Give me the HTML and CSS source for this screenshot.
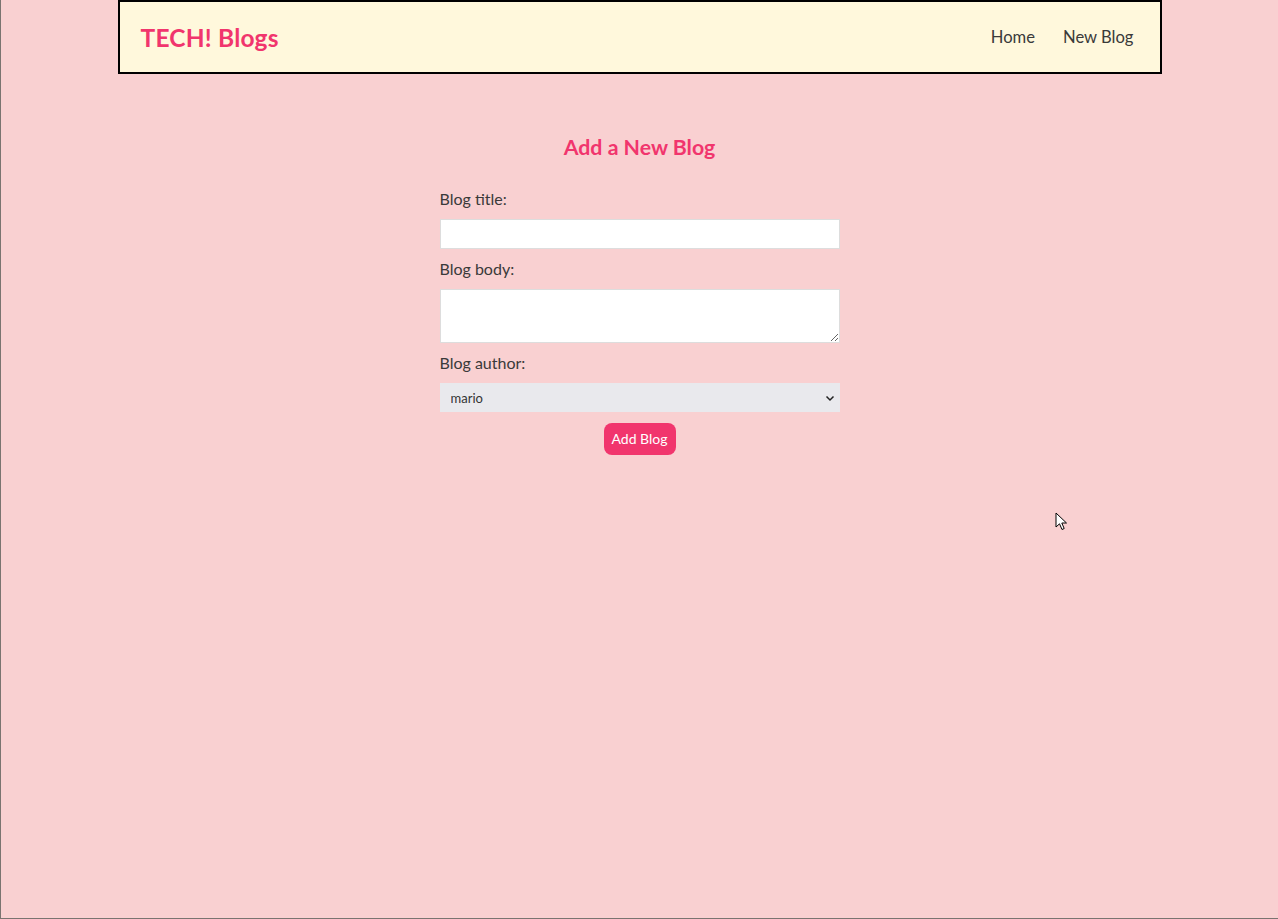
FILE: index.html
```html
<!DOCTYPE html>
<html lang="en">
<head>
<meta charset="utf-8">
<title>TECH! Blogs</title>
<link rel="stylesheet" href="styles.css">
</head>
<body>
<div class="frame">
  <nav class="navbar">
    <h1 class="brand">TECH! Blogs</h1>
    <div class="links">
      <a href="#">Home</a>
      <a href="#">New Blog</a>
    </div>
  </nav>
  <div class="create">
    <h2 class="heading">Add a New Blog</h2>
    <form class="form">
      <label class="label">Blog title:</label>
      <input class="field" type="text">
      <label class="label">Blog body:</label>
      <textarea class="field area"></textarea>
      <label class="label">Blog author:</label>
      <div class="select-wrap">
        <select class="field select">
          <option>mario</option>
          <option>yoshi</option>
        </select>
        <svg class="chevron" width="10" height="8" viewBox="0 0 10 8"><path d="M1.5 2.5 L5 6 L8.5 2.5" fill="none" stroke="#222" stroke-width="1.5"/></svg>
      </div>
      <button class="btn" type="button">Add Blog</button>
    </form>
  </div>
  <svg class="cursor" width="14" height="20" viewBox="0 0 14 20"><path d="M1 1 L1 15 L4.5 11.8 L7 17.5 L9.2 16.5 L6.8 11 L11.5 11 Z" fill="#fff" stroke="#000" stroke-width="1" stroke-linejoin="round"/></svg>
</div>
</body>
</html>
```
FILE: styles.css
```css
html, body {
  margin: 0;
  padding: 0;
}
body {
  font-family: Lato, "Open Sans", sans-serif;
  color: #333;
  background: #f9d0d1;
}
.frame {
  position: relative;
  box-sizing: border-box;
  height: 919px;
  border-left: 1px solid #7a7470;
  border-bottom: 1px solid #7a7470;
  background: #f9d0d1;
}
.navbar {
  box-sizing: border-box;
  width: 1044px;
  height: 74px;
  margin: 0 auto;
  padding: 0 20px;
  display: flex;
  align-items: center;
  justify-content: space-between;
  background: #fff8dc;
  border: 2px solid #000;
}
.brand {
  margin: 0 0 0 1px;
  font-size: 24.5px;
  font-weight: 700;
  color: #f1356d;
  letter-spacing: 0.2px;
}
.links {
  display: flex;
}
.links a {
  margin-left: 16px;
  padding: 6px;
  font-size: 16.6px;
  color: #3a3a3a;
  text-decoration: none;
}
.create {
  width: 400px;
  margin: 0 auto;
  text-align: center;
}
.heading {
  margin: 61px 0 30px;
  font-size: 21.3px;
  line-height: 24px;
  font-weight: 700;
  color: #f1356d;
}
.form {
  display: flex;
  flex-direction: column;
  align-items: stretch;
}
.label {
  display: block;
  text-align: left;
  font-size: 16px;
  line-height: 20px;
  color: #3a3a3a;
}
.field {
  box-sizing: border-box;
  width: 100%;
  margin: 10px 0;
  padding: 6px 10px;
  border: 1px solid #ddd;
  background: #fff;
  font-family: inherit;
  display: block;
}
input.field {
  height: 30px;
}
.area {
  height: 54px;
  resize: vertical;
}
.select-wrap {
  position: relative;
}
.select {
  height: 29px;
  appearance: none;
  -webkit-appearance: none;
  background: #e9e9ed;
  border: none;
  border-radius: 0;
  font-size: 13px;
  color: #333;
  padding: 4px 11px;
}
.chevron {
  position: absolute;
  right: 5px;
  top: 21px;
}
.btn {
  align-self: center;
  margin-top: 1px;
  background: #f1356d;
  color: #fff;
  border: 0;
  padding: 8px;
  border-radius: 8px;
  font-family: inherit;
  font-size: 14px;
  line-height: 16px;
  cursor: pointer;
}
.cursor {
  position: absolute;
  left: 1054px;
  top: 512px;
}
```
